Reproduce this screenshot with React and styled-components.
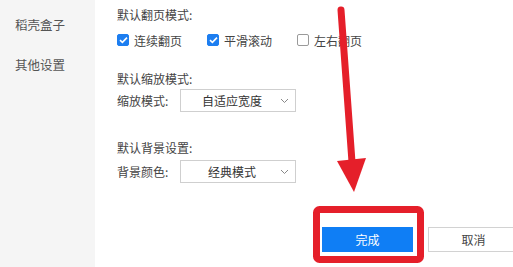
import React, { useState } from "react";
import styled, { createGlobalStyle } from "styled-components";

const GlobalStyle = createGlobalStyle`
  html, body {
    margin: 0;
    padding: 0;
    background: #fff;
    overflow: hidden;
  }
  body {
    font-family: "Noto Sans CJK SC", "Noto Sans", sans-serif;
  }
`;

const Page = styled.div`
  position: relative;
  display: flex;
  width: 513px;
  height: 267px;
  overflow: hidden;
`;

const Sidebar = styled.nav`
  width: 95px;
  flex-shrink: 0;
  background: #f5f5f5;
  padding-top: 15px;
  box-sizing: border-box;
`;

const NavItem = styled.div`
  height: 40px;
  line-height: 20px;
  padding-left: 15px;
  font-size: 12.5px;
  color: #555;
`;

const Main = styled.main`
  flex: 1;
  display: flex;
  flex-direction: column;
  padding: 7px 0 0 22px;
  box-sizing: border-box;
`;

const Title = styled.div`
  height: 16px;
  line-height: 16px;
  font-size: 12px;
  color: #444;
  margin-top: ${(p) => p.$top || 0}px;
`;

const CheckRow = styled.div`
  display: flex;
  align-items: center;
  height: 18px;
  margin-top: 8px;
`;

const CheckItem = styled.label`
  display: flex;
  align-items: center;
  gap: 5px;
  width: 90px;
  font-size: 12px;
  color: #444;
`;

const Box = styled.span`
  width: 12px;
  height: 12px;
  border-radius: 2px;
  box-sizing: border-box;
  display: flex;
  align-items: center;
  justify-content: center;
  background: ${(p) => (p.$on ? "#1d7ef0" : "#fff")};
  border: 1px solid ${(p) => (p.$on ? "#1d7ef0" : "#9a9a9a")};
`;

const SelectRow = styled.div`
  display: flex;
  align-items: center;
  margin-top: ${(p) => p.$top || 0}px;
`;

const SelectLabel = styled.span`
  width: 63px;
  font-size: 12px;
  color: #444;
`;

const Select = styled.div`
  position: relative;
  width: 116px;
  height: 23px;
  box-sizing: border-box;
  border: 1px solid #cfcfcf;
  display: flex;
  align-items: center;
  justify-content: center;
  padding-right: 12px;
  font-size: 12px;
  color: #333;
`;

const Chevron = styled.svg`
  position: absolute;
  right: 6px;
  top: 8px;
`;

const Footer = styled.div`
  display: flex;
  justify-content: flex-end;
  gap: 15px;
  margin-top: 44px;
  margin-right: -6px;
`;

const Button = styled.button`
  width: 91px;
  height: 25px;
  box-sizing: border-box;
  font-family: inherit;
  font-size: 12px;
  border-radius: 0;
  padding: 0;
  border: 1px solid ${(p) => (p.$primary ? "#0f7ef5" : "#d2d2d2")};
  background: ${(p) => (p.$primary ? "#0f7ef5" : "#fff")};
  color: ${(p) => (p.$primary ? "#fff" : "#444")};
`;

const Annotation = styled.svg`
  position: absolute;
  left: 0;
  top: 0;
  pointer-events: none;
`;

const Check = ({ on, children }) => (
  <CheckItem>
    <Box $on={on}>
      {on && (
        <svg width="9" height="8" viewBox="0 0 9 8">
          <path d="M1 4.2 L3.4 6.4 L8 1.6" fill="none" stroke="#fff" strokeWidth="1.6" />
        </svg>
      )}
    </Box>
    {children}
  </CheckItem>
);

const Dropdown = ({ value }) => (
  <Select>
    {value}
    <Chevron width="9" height="6" viewBox="0 0 9 6">
      <path d="M1 1 L4.5 4.5 L8 1" fill="none" stroke="#888" strokeWidth="1" />
    </Chevron>
  </Select>
);

const App = () => {
  const [checks] = useState([
    { label: "连续翻页", on: true },
    { label: "平滑滚动", on: true },
    { label: "左右翻页", on: false },
  ]);

  return (
    <Page>
      <GlobalStyle />
      <Sidebar>
        <NavItem>稻壳盒子</NavItem>
        <NavItem>其他设置</NavItem>
      </Sidebar>
      <Main>
        <Title>默认翻页模式:</Title>
        <CheckRow>
          {checks.map((c) => (
            <Check key={c.label} on={c.on}>
              {c.label}
            </Check>
          ))}
        </CheckRow>
        <Title $top={22}>默认缩放模式:</Title>
        <SelectRow $top={2}>
          <SelectLabel>缩放模式:</SelectLabel>
          <Dropdown value="自适应宽度" />
        </SelectRow>
        <Title $top={28}>默认背景设置:</Title>
        <SelectRow $top={4}>
          <SelectLabel>背景颜色:</SelectLabel>
          <Dropdown value="经典模式" />
        </SelectRow>
        <Footer>
          <Button $primary>完成</Button>
          <Button>取消</Button>
        </Footer>
      </Main>
      <Annotation width="513" height="267" viewBox="0 0 513 267">
        <line x1="341" y1="10" x2="352" y2="162" stroke="#e51f2a" strokeWidth="7" strokeLinecap="round" />
        <polygon points="337,161 366,158 354,192" fill="#e51f2a" />
        <rect x="316.5" y="209.5" width="104" height="50" rx="3" fill="none" stroke="#e51f2a" strokeWidth="7" />
      </Annotation>
    </Page>
  );
};

export default App;
